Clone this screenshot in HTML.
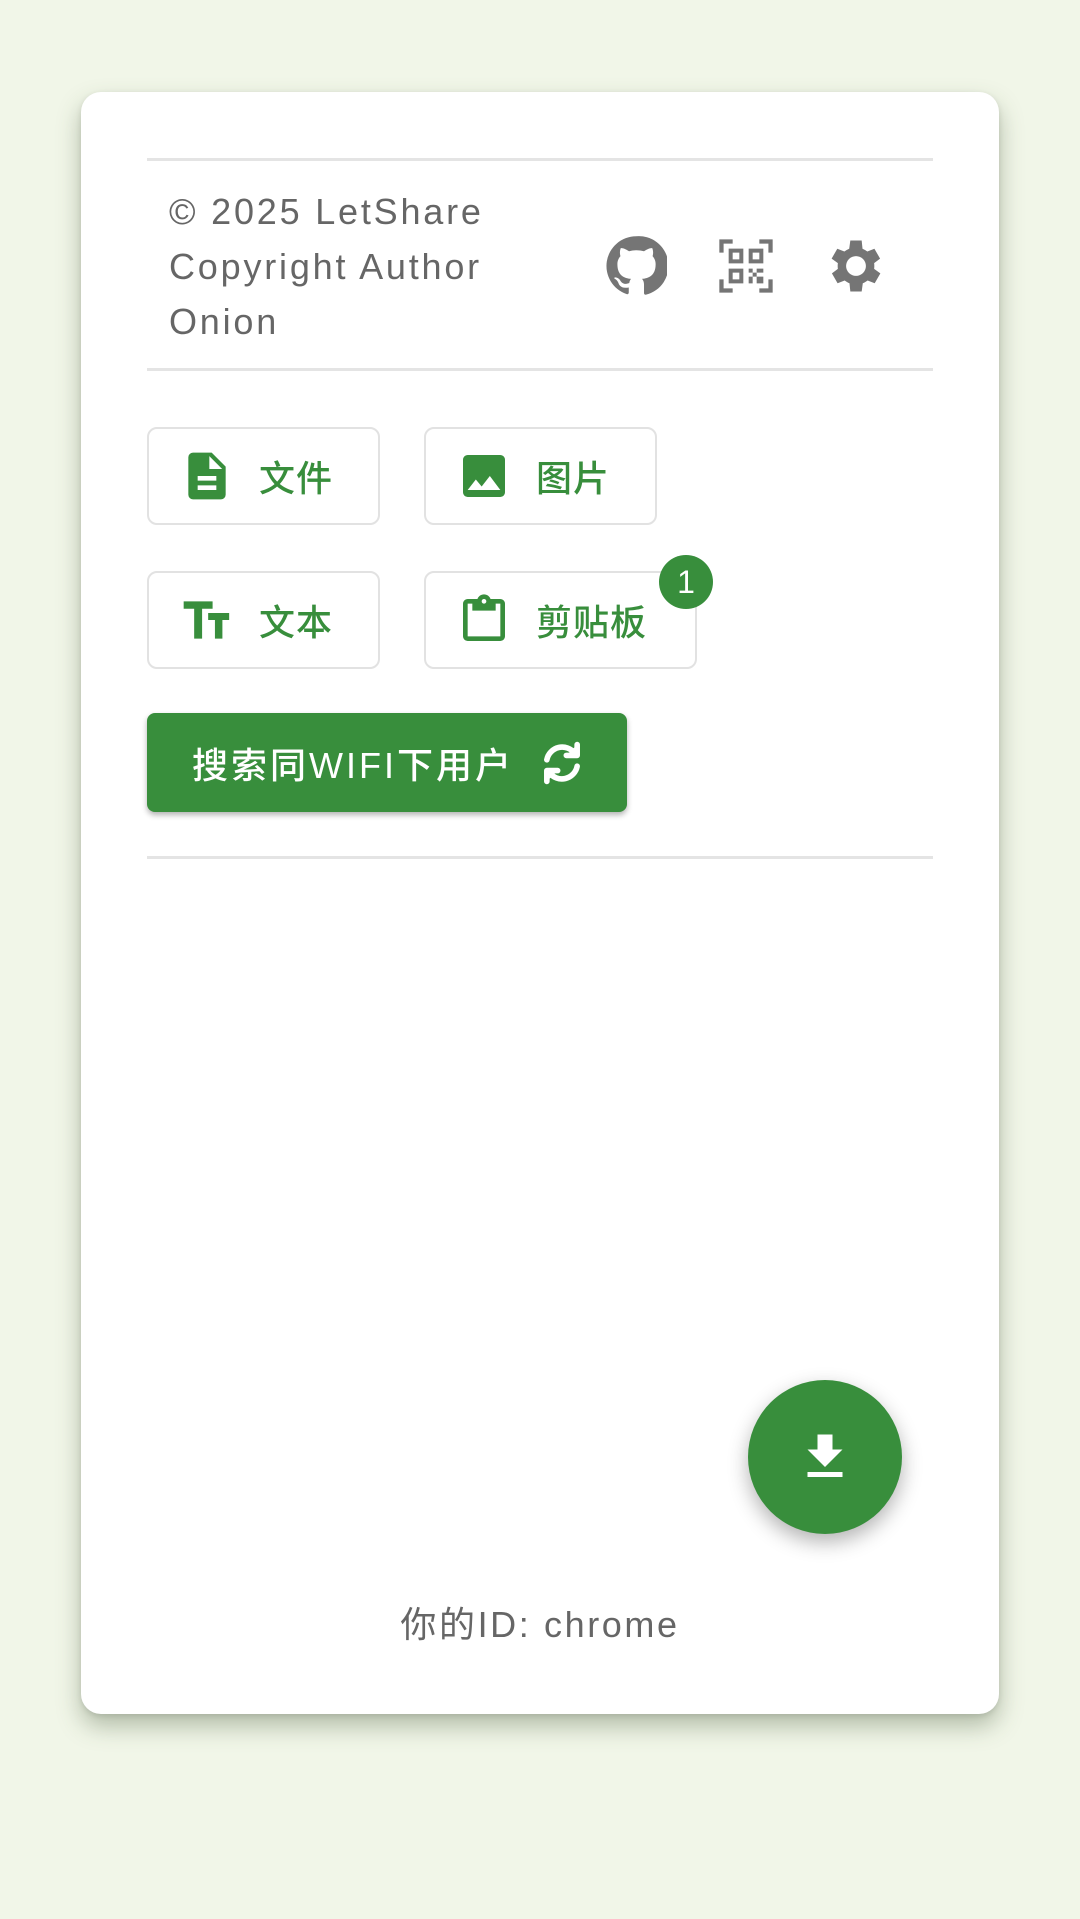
<!DOCTYPE html>
<html><head><meta charset="utf-8"><style>
html,body{margin:0;padding:0;width:1080px;height:1919px;background:#f1f6e8;overflow:hidden;font-family:"Liberation Sans","Noto Sans CJK SC",sans-serif}
.card{position:absolute;left:81px;top:92px;width:918px;height:1622px;background:#fff;border-radius:20px;box-shadow:0 12px 24px rgba(60,80,50,.35),0 2px 6px rgba(0,0,0,.1)}
.hr{position:absolute;left:147px;width:786px;height:3px;background:#e4e4e4}
.copy{position:absolute;left:169px;top:184px;font-size:36px;line-height:55px;color:#666;letter-spacing:2.8px}
.ic{position:absolute;fill:#757575}
.btn{position:absolute;box-sizing:border-box;border:2px solid #e2e2e2;border-radius:10px;height:98px;color:#388e3c;font-size:36px;display:flex;align-items:center;font-weight:500;letter-spacing:1px}
.btn svg{fill:#388e3c;margin-left:30px;margin-right:24px}
.badge{position:absolute;left:659px;top:555px;width:54px;height:54px;border-radius:50%;background:#388e3c;color:#fff;font-size:32px;text-align:center;line-height:54px}
.search{position:absolute;left:147px;top:713px;width:480px;height:99px;background:#388e3c;border-radius:8px;box-shadow:0 3px 6px rgba(0,0,0,.3);color:#fff;font-size:36px;display:flex;align-items:center;box-sizing:border-box;padding-left:45px;letter-spacing:3px;font-weight:500}
.fab{position:absolute;left:748px;top:1380px;width:154px;height:154px;border-radius:50%;background:#388e3c;box-shadow:0 8px 20px rgba(0,0,0,.3)}
.id{position:absolute;left:0;width:1080px;top:1596px;text-align:center;font-size:36px;color:#666;letter-spacing:2.6px}
</style></head><body>
<div class="card"></div>
<div class="hr" style="top:158px"></div>
<div class="copy">© 2025 LetShare<br>Copyright Author<br>Onion</div>
<svg class="ic" style="left:605px;top:235px" width="62" height="62" viewBox="0 0 24 24"><path d="M12 .5a11.5 11.5 0 0 0-3.6 22.4c.6.1.8-.3.8-.6v-2c-3.2.7-3.900-1.5-3.9-1.5-.5-1.3-1.3-1.7-1.3-1.7-1-.7.1-.7.1-.7 1.2.1 1.8 1.2 1.8 1.2 1 1.8 2.8 1.3 3.5 1 .1-.8.4-1.3.7-1.6-2.6-.3-5.3-1.3-5.3-5.7 0-1.3.5-2.3 1.200-3.1-.1-.3-.5-1.5.1-3.1 0 0 1-.3 3.2 1.2a11 11 0 0 1 5.8 0c2.2-1.5 3.2-1.2 3.2-1.2.6 1.6.2 2.8.1 3.1.7.8 1.2 1.8 1.2 3.1 0 4.4-2.7 5.4-5.3 5.7.4.4.8 1.1.8 2.2v3.3c0 .3.2.7.8.6A11.5 11.5 0 0 0 12 .5z"/></svg>
<svg class="ic" style="left:714px;top:234px" width="64" height="64" viewBox="0 0 24 24"><path d="M2 2h5v1.6H3.6V7H2zM17 2h5v5h-1.6V3.6H17zM2 17h1.6v3.4H7V22H2zM20.4 17H22v5h-5v-1.6h3.4zM5.5 5.5h5.5V11H5.5zm1.5 1.5v2.5h2.5V7zM13 5.5h5.5V11H13zm1.5 1.5v2.5H17V7zM5.5 13H11v5.5H5.5zm1.5 1.5V17h2.5v-2.5zM13 13h1.5v1.5H13zm1.5 1.5H16V16h-1.5zM16 13h2.5v1.5H16zM13 16h1.5v2.5H13zm3 0h2.5v2.5H16z"/></svg>
<svg class="ic" style="left:822px;top:232px" width="68" height="68" viewBox="0 0 24 24"><path d="M19.4 13a7.5 7.5 0 0 0 0-2l2.1-1.6-2-3.5-2.5 1a7.3 7.3 0 0 0-1.7-1L15 3h-4l-.4 2.9a7.3 7.3 0 0 0-1.7 1l-2.5-1-2 3.5L6.6 11a7.5 7.5 0 0 0 0 2l-2.1 1.6 2 3.5 2.5-1c.5.4 1.1.7 1.7 1L11 21h4l.4-2.900c.6-.3 1.2-.6 1.7-1l2.5 1 2-3.5zM13 15.5a3.5 3.5 0 1 1 0-7 3.5 3.5 0 0 1 0 7z" transform="translate(-1 0)"/></svg>
<div class="hr" style="top:368px"></div>

<div class="btn" style="left:147px;top:427px;width:233px"><svg width="56" height="56" viewBox="0 0 24 24"><path d="M14 2H6a2 2 0 0 0-2 2v16a2 2 0 0 0 2 2h12a2 2 0 0 0 2-2V8zM16 18H8v-2h8zm0-4H8v-2h8zm-3-5V3.5L18.5 9z"/></svg>文件</div>
<div class="btn" style="left:424px;top:427px;width:233px"><svg width="56" height="56" viewBox="0 0 24 24"><path d="M21 19V5a2 2 0 0 0-2-2H5a2 2 0 0 0-2 2v14a2 2 0 0 0 2 2h14a2 2 0 0 0 2-2zM8.5 13.5l2.5 3 3.5-4.5 4.5 6H5z"/></svg>图片</div>
<div class="btn" style="left:147px;top:571px;width:233px"><svg width="56" height="56" viewBox="0 0 24 24"><path d="M2 4v3.2h4.5V20h3.4V7.2h4.5V4zm19.5 5h-9v3h2.9v8h3.2v-8h2.900z"/></svg>文本</div>
<div class="btn" style="left:424px;top:571px;width:273px"><svg width="56" height="56" viewBox="0 0 24 24"><path d="M19 3h-4.2C14.4 1.8 13.3 1 12 1s-2.4.8-2.8 2H5a2 2 0 0 0-2 2v14a2 2 0 0 0 2 2h14a2 2 0 0 0 2-2V5a2 2 0 0 0-2-2zm-7 0a1 1 0 1 1 0 2 1 1 0 0 1 0-2zm7 16H5V5h2v3h10V5h2z"/></svg>剪贴板</div>
<div class="badge">1</div>

<div class="search">搜索同WIFI下用户<svg style="margin-left:22px" width="52" height="52" viewBox="0 0 24 24" fill="none" stroke="#fff" stroke-width="2.6" stroke-linecap="round"><path d="M5 10.5A7.2 7.2 0 0 1 17.8 7.5"/><path d="M19 13.5A7.2 7.2 0 0 1 6.2 16.5"/><path d="M19 3.5v5h-5" fill="#fff" stroke-linejoin="round"/><path d="M5 20.5v-5h5" fill="#fff" stroke-linejoin="round"/></svg></div>
<div class="hr" style="top:856px"></div>

<div class="fab"><svg style="position:absolute;left:47px;top:47px" width="60" height="60" viewBox="0 0 24 24" fill="#fff"><path d="M19 9h-4V3H9v6H5l7 7zM5 18v2h14v-2z"/></svg></div>
<div class="id">你的ID: chrome</div>
</body></html>
